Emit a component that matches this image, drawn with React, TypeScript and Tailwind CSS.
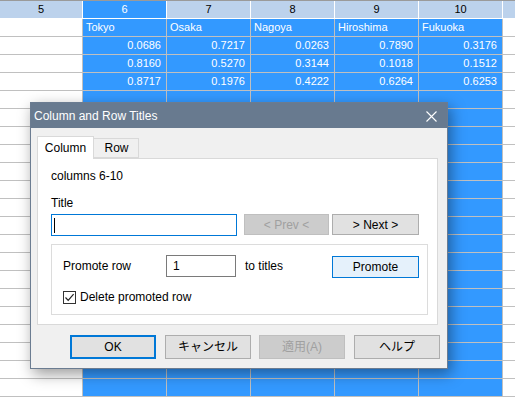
const names = ["Tokyo", "Osaka", "Nagoya", "Hiroshima", "Fukuoka"];
const data = [
  ["0.0686", "0.7217", "0.0263", "0.7890", "0.3176"],
  ["0.8160", "0.5270", "0.3144", "0.1018", "0.1512"],
  ["0.8717", "0.1976", "0.4222", "0.6264", "0.6253"],
];
const cols = ["6", "7", "8", "9", "10"];

function Sheet() {
  const rows = Array.from({ length: 22 }, (_, i) => i);
  return (
    <div className="flex flex-col text-[11px] font-['Liberation_Sans',sans-serif]">
      <div className="flex h-[19px] border-t border-t-[#9a9a9a] border-b border-b-white">
        <div className="w-[83px] shrink-0 border-r border-white bg-[#bcd2ec] text-center leading-[17px] text-black">5</div>
        {cols.map((c, i) => (
          <div
            key={c}
            className={
              i === 0
                ? "w-[84px] shrink-0 border-r border-white bg-[#3399ff] text-center leading-[17px] text-white"
                : "w-[84px] shrink-0 border-r border-white bg-[#bcd2ec] text-center leading-[17px] text-black"
            }
          >
            {c}
          </div>
        ))}
        <div className="flex-1 bg-[#bcd2ec]" />
      </div>
      {rows.map((r) => (
        <div key={r} className="flex h-[18px] border-b border-[#c0c0c0]">
          <div className="w-[83px] shrink-0 border-r border-[#c0c0c0] bg-white" />
          {cols.map((c, i) => (
            <div
              key={c}
              className={
                r === 0
                  ? "w-[84px] shrink-0 border-r border-[#c0c0c0] bg-[#3399ff] px-[3px] text-left leading-[17px] text-white"
                  : "w-[84px] shrink-0 border-r border-[#c0c0c0] bg-[#3399ff] px-[5px] text-right leading-[17px] text-white"
              }
            >
              {r === 0 ? names[i] : r <= 3 ? data[r - 1][i] : ""}
            </div>
          ))}
          <div className="flex-1 bg-white" />
        </div>
      ))}
    </div>
  );
}

function Btn({ label, kind, w }: { label: string; kind: "normal" | "disabled" | "default" | "hot"; w: string }) {
  const cls = {
    normal: "border border-[#adadad] bg-[#e1e1e1] text-black",
    disabled: "border border-[#bfbfbf] bg-[#cccccc] text-[#a0a0a0]",
    default: "border-2 border-[#0078d7] bg-[#e1e1e1] text-black",
    hot: "border border-[#0078d7] bg-[#e5f1fb] text-black",
  }[kind];
  return <div className={`${w} ${cls} flex shrink-0 items-center justify-center`}>{label}</div>;
}

function Dialog() {
  return (
    <div className="absolute left-[30px] top-[102px] flex h-[267px] w-[418px] flex-col border border-[#6b7c91] bg-[#f0f0f0] text-[12px] text-black shadow-[3px_5px_14px_rgba(0,0,0,0.4)] font-['Liberation_Sans','Noto_Sans_CJK_JP',sans-serif]">
      <div className="flex h-[25px] shrink-0 items-center justify-between bg-[#687a8f] pl-[3px] pr-[10px] text-white">
        <span className="text-[12px]">Column and Row Titles</span>
        <svg width="11" height="11" viewBox="0 0 11 11" className="mt-[1px]">
          <path d="M0.5 0.5 L10.5 10.5 M10.5 0.5 L0.5 10.5" stroke="white" strokeWidth="1.1" />
        </svg>
      </div>
      <div className="flex flex-col pl-[6px] pt-[8px]">
        <div className="relative z-10 flex h-[22px] items-end">
          <div className="-mb-px flex h-[23px] w-[57px] items-center justify-center border border-b-0 border-[#d9d9d9] bg-white pb-[1px]">
            Column
          </div>
          <div className="flex h-[20px] w-[45px] items-center justify-center border border-l-0 border-[#d9d9d9] bg-[#f0f0f0] pl-[1px]">
            Row
          </div>
        </div>
        <div className="flex h-[167px] w-[401px] flex-col border border-[#d9d9d9] bg-white pl-[13px]">
          <div className="mt-[10px] leading-[14px]">columns 6-10</div>
          <div className="mt-[13px] leading-[14px]">Title</div>
          <div className="mt-[4px] flex items-start">
            <div className="flex h-[22px] w-[186px] items-center border border-[#0078d7] bg-white pl-[2px]">
              <span className="h-[15px] w-px bg-black" />
            </div>
            <div className="ml-[7px]">
              <Btn label="< Prev <" kind="disabled" w="w-[85px] h-[21px]" />
            </div>
            <div className="ml-[3px]">
              <Btn label="> Next >" kind="normal" w="w-[87px] h-[21px]" />
            </div>
          </div>
          <div className="mt-[8px] flex h-[71px] w-[377px] flex-col border border-[#dcdcdc] bg-white pl-[11px]">
            <div className="mt-[9px] flex items-center">
              <span className="w-[103px]">Promote row</span>
              <div className="flex h-[22px] w-[70px] items-center border border-[#7a7a7a] pl-[6px]">1</div>
              <span className="ml-[9px] w-[87px]">to titles</span>
              <div className="mt-[2px]">
                <Btn label="Promote" kind="hot" w="w-[87px] h-[22px]" />
              </div>
            </div>
            <div className="mt-[10px] flex items-center">
              <div className="flex h-[13px] w-[13px] items-center justify-center border border-[#333] bg-white">
                <svg width="11" height="11" viewBox="0 0 11 11">
                  <path d="M1.5 5.5 L4.2 8.3 L9.6 2.2" fill="none" stroke="#222" strokeWidth="1.2" />
                </svg>
              </div>
              <span className="ml-[4px]">Delete promoted row</span>
            </div>
          </div>
        </div>
        <div className="mt-[10px] flex pl-[33px]">
          <Btn label="OK" kind="default" w="w-[86px] h-[24px]" />
          <div className="ml-[9px]">
            <Btn label="キャンセル" kind="normal" w="w-[86px] h-[24px]" />
          </div>
          <div className="ml-[8px]">
            <Btn label="適用(A)" kind="disabled" w="w-[86px] h-[24px]" />
          </div>
          <div className="ml-[9px]">
            <Btn label="ヘルプ" kind="normal" w="w-[86px] h-[24px]" />
          </div>
        </div>
      </div>
    </div>
  );
}

export default function App() {
  return (
    <div className="relative h-[397px] w-[515px] overflow-hidden bg-white">
      <Sheet />
      <Dialog />
    </div>
  );
}
